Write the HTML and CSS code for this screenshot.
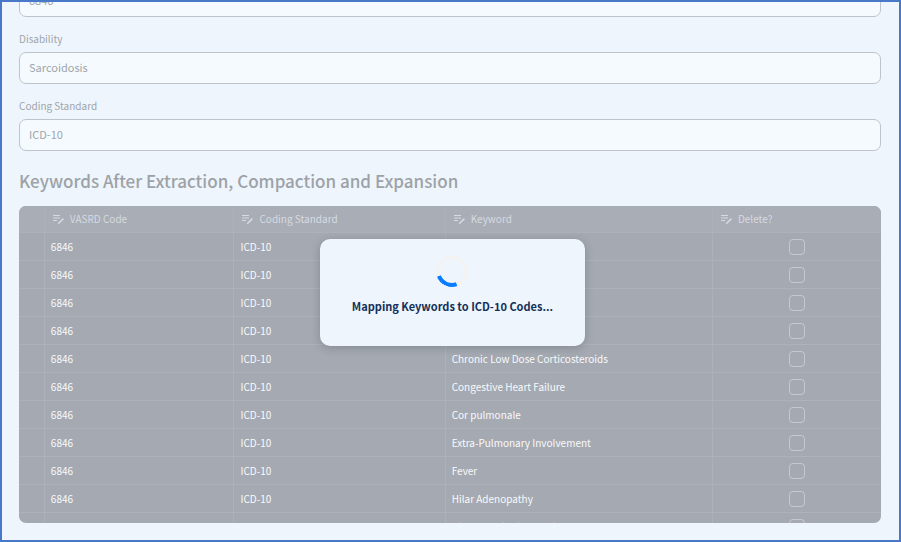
FILE: index.html
```html
<!DOCTYPE html>
<html lang="en">
<head>
<meta charset="utf-8">
<title>Keyword Mapping</title>
<link rel="stylesheet" href="styles.css">
</head>
<body>
<svg class="symbols">
  <symbol id="edit-note" viewBox="0 0 12 12">
    <path d="M1 2.5h7M1 5h7M1 7.5h4" fill="none" stroke="currentColor" stroke-width="1"/>
    <path d="M6.2 10.8l5.2-5.2" fill="none" stroke="currentColor" stroke-width="1.5"/>
  </symbol>
</svg>
<main class="page">
  <div class="field"><label for="code">VASRD Code</label><input id="code" type="text" value="6846" disabled></div>
  <div class="field"><label for="disability">Disability</label><input id="disability" type="text" value="Sarcoidosis" disabled></div>
  <div class="field"><label for="standard">Coding Standard</label><input id="standard" type="text" value="ICD-10" disabled></div>
  <h2>Keywords After Extraction, Compaction and Expansion</h2>
  <div class="grid">
    <table>
      <colgroup><col class="c-mark"><col class="c-code"><col class="c-std"><col class="c-key"><col></colgroup>
      <thead>
        <tr>
          <th></th>
          <th><span class="head"><svg><use href="#edit-note"/></svg>VASRD Code</span></th>
          <th><span class="head"><svg><use href="#edit-note"/></svg>Coding Standard</span></th>
          <th><span class="head"><svg><use href="#edit-note"/></svg>Keyword</span></th>
          <th><span class="head"><svg><use href="#edit-note"/></svg>Delete?</span></th>
        </tr>
      </thead>
      <tbody>
        <tr><td></td><td>6846</td><td>ICD-10</td><td></td><td class="check"><input type="checkbox" aria-label="Delete row 1"></td></tr>
        <tr><td></td><td>6846</td><td>ICD-10</td><td></td><td class="check"><input type="checkbox" aria-label="Delete row 2"></td></tr>
        <tr><td></td><td>6846</td><td>ICD-10</td><td></td><td class="check"><input type="checkbox" aria-label="Delete row 3"></td></tr>
        <tr><td></td><td>6846</td><td>ICD-10</td><td></td><td class="check"><input type="checkbox" aria-label="Delete row 4"></td></tr>
        <tr><td></td><td>6846</td><td>ICD-10</td><td>Chronic Low Dose Corticosteroids</td><td class="check"><input type="checkbox" aria-label="Delete row 5"></td></tr>
        <tr><td></td><td>6846</td><td>ICD-10</td><td>Congestive Heart Failure</td><td class="check"><input type="checkbox" aria-label="Delete row 6"></td></tr>
        <tr><td></td><td>6846</td><td>ICD-10</td><td>Cor pulmonale</td><td class="check"><input type="checkbox" aria-label="Delete row 7"></td></tr>
        <tr><td></td><td>6846</td><td>ICD-10</td><td>Extra-Pulmonary Involvement</td><td class="check"><input type="checkbox" aria-label="Delete row 8"></td></tr>
        <tr><td></td><td>6846</td><td>ICD-10</td><td>Fever</td><td class="check"><input type="checkbox" aria-label="Delete row 9"></td></tr>
        <tr><td></td><td>6846</td><td>ICD-10</td><td>Hilar Adenopathy</td><td class="check"><input type="checkbox" aria-label="Delete row 10"></td></tr>
        <tr><td></td><td>6846</td><td>ICD-10</td><td>Hilar Lymphadenopathy</td><td class="check"><input type="checkbox" aria-label="Delete row 11"></td></tr>
      </tbody>
    </table>
  </div>
</main>
<div class="overlay">
  <div class="dialog" role="status">
    <div class="spinner"></div>
    <p>Mapping Keywords to ICD-10 Codes...</p>
  </div>
</div>
</body>
</html>
```
FILE: styles.css
```css
* { box-sizing: border-box; }

body {
  margin: 0;
  font-family: "Noto Sans CJK SC", "Noto Sans", sans-serif;
  font-size: 11px;
  color: #a0a5aa;
}

.symbols { display: none; }

.page {
  height: 100vh;
  overflow: hidden;
  display: flex;
  flex-direction: column;
  justify-content: flex-end;
  padding: 0 18px 17px 17px;
  background: #eef5fd;
  border: 2px solid #4a78c8;
}

.field {
  flex: none;
  display: flex;
  flex-direction: column;
  gap: 4px;
  margin-bottom: 13px;
}

.field label { line-height: 18px; font-size: 10px; }

.field input {
  height: 32px;
  padding: 0 9px 2px;
  border: 1px solid #bfc4ca;
  border-radius: 7px;
  background: #f5fafe;
  color: #a0a5aa;
  font: inherit;
}

h2 {
  flex: none;
  margin: 3px 0 11px;
  font-size: 17px;
  line-height: 28px;
  font-weight: 500;
  color: #9da2a7;
}

.grid {
  flex: none;
  height: 317px;
  overflow: hidden;
  border-radius: 7px;
  background: #a5a9b1;
}

table {
  width: 100%;
  table-layout: fixed;
  border-spacing: 0;
  color: #f8fafc;
}

.c-mark { width: 3%; }
.c-code { width: 22%; }
.c-std { width: 24.5%; }
.c-key { width: 31%; }

th, td {
  height: 28px;
  padding: 0 0 0 7px;
  border: solid #adb1b9;
  border-width: 0 1px 1px 0;
  text-align: left;
  font-size: 10px;
  line-height: 16px;
  white-space: nowrap;
}

td { padding-left: 6px; }

th:last-child, td:last-child { border-right: 0; }

th {
  height: 27px;
  background: #a9adb6;
  color: #d6dae1;
  font-weight: 400;
}

.head { display: flex; align-items: center; gap: 6px; }
.head svg { width: 12px; height: 12px; }

td.check { padding: 0; text-align: center; }

.check input {
  appearance: none;
  display: block;
  width: 16px;
  height: 16px;
  margin: 0 auto;
  border: 1px solid #c6cad0;
  border-radius: 4px;
}

.overlay {
  position: absolute;
  inset: 0;
  display: grid;
  place-items: center;
  padding: 43px 0 0 4px;
}

.dialog {
  display: flex;
  flex-direction: column;
  align-items: center;
  gap: 7px;
  padding: 16px 32px 28px;
  border-radius: 10px;
  background: #eef5fd;
  box-shadow: 0 2px 8px rgba(60, 70, 85, 0.3);
  color: #14305a;
}

.dialog p { margin: 0; line-height: 24px; font-weight: 700; }

.spinner {
  width: 32px;
  height: 32px;
  border: 4px solid #f3f3f3;
  border-bottom-color: #0a7cff;
  border-radius: 50%;
  transform: rotate(25deg);
}
```
